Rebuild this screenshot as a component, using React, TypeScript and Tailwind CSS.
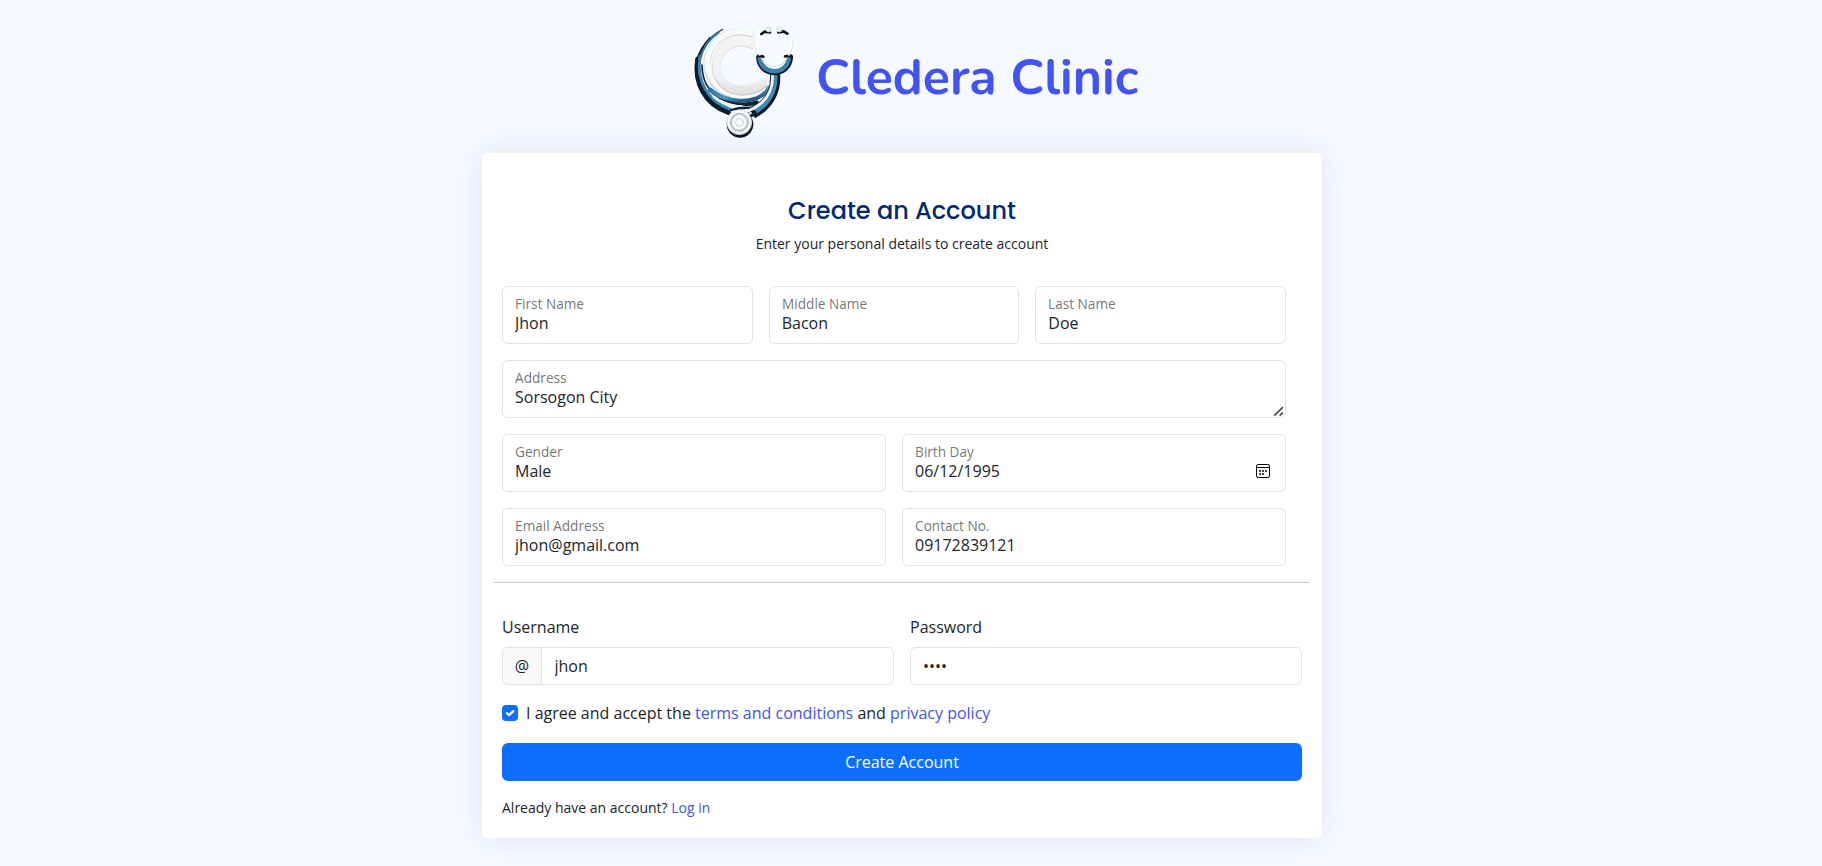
import React from "react";

const fieldBase =
  "block w-full h-[58px] rounded-md border border-[#dee2e6] bg-white px-3 pt-[26px] pb-[10px] text-base leading-[20px] text-[#212529] outline-none";

function FieldLabel({ children, htmlFor }: { children: React.ReactNode; htmlFor: string }) {
  return (
    <label
      htmlFor={htmlFor}
      className="pointer-events-none absolute top-0 left-0 origin-top-left border border-transparent px-3 py-4 text-base leading-6 whitespace-nowrap text-[#212529]/65 [transform:scale(.85)_translateY(-.5rem)_translateX(.15rem)]"
    >
      {children}
    </label>
  );
}

function Field({
  id,
  label,
  value,
  children,
}: {
  id: string;
  label: string;
  value: string;
  children?: React.ReactNode;
}) {
  return (
    <div className="relative min-w-0 flex-1">
      <input id={id} type="text" defaultValue={value} className={fieldBase} />
      <FieldLabel htmlFor={id}>{label}</FieldLabel>
      {children}
    </div>
  );
}

function CalendarIcon() {
  return (
    <svg viewBox="0 0 14 14" className="absolute top-[30px] right-4 h-[14px] w-[14px]" fill="none">
      <rect x=".5" y=".5" width="13" height="13" rx="1.6" stroke="#000" />
      <path d="M1 3.5H13" stroke="#000" />
      <path d="M3 6h2v2H3zM6 6h2v2H6zM9 6h2v2H9zM3 9h2v2H3zM6 9h2v2H6z" fill="#444" />
    </svg>
  );
}

function ResizeGrip() {
  return (
    <svg viewBox="0 0 11 10" className="absolute right-[2px] bottom-[2px] h-[10px] w-[11px]" fill="none" stroke="#4d4d4d" strokeWidth="1.7">
      <path d="M1.2 9.6L10 1.2M6.6 9.6L10 6.6" />
    </svg>
  );
}

function Logo() {
  return (
    <svg viewBox="0 0 390 390" className="h-[130px] w-[130px] shrink-0" fill="none" strokeLinecap="round" strokeLinejoin="round">
      <defs>
        <linearGradient id="tube" x1="0" y1="0" x2="1" y2="1">
          <stop offset="0" stopColor="#2d6f99" />
          <stop offset=".5" stopColor="#4596c4" />
          <stop offset="1" stopColor="#16324a" />
        </linearGradient>
        <linearGradient id="letter" x1="0" y1="0" x2="0" y2="1">
          <stop offset="0" stopColor="#f4f4f4" />
          <stop offset=".7" stopColor="#f1f1f1" />
          <stop offset="1" stopColor="#e3e4e4" />
        </linearGradient>
        <radialGradient id="disc">
          <stop offset="0" stopColor="#ffffff" />
          <stop offset=".6" stopColor="#e4e8eb" />
          <stop offset="1" stopColor="#c3cbd1" />
        </radialGradient>
      </defs>
      {/* outer tubing */}
      <path d="M128 43C84 66 58 103 51 140" stroke="#2b4c66" strokeWidth="4" />
      <path d="M90 70C70 92 56 117 51 140" stroke="#0c1c2b" strokeWidth="7" />
      <path d="M53 132C42 205 75 268 145 292" stroke="#0c1c2b" strokeWidth="15" />
      <path d="M60 125C49 197 80 256 151 283" stroke="#3b83ae" strokeWidth="9" />
      <path d="M116 53C85 73 70 96 62 128" stroke="#3577a1" strokeWidth="6" />
      <path d="M68 150C67 200 94 254 160 276" stroke="#fafcfd" strokeWidth="8" />
      <path d="M66 150C66 180 73 204 90 225" stroke="#14232f" strokeWidth="5" />
      {/* letter C */}
      <path d="M220 58C155 37 96 70 83 127C74 181 105 225 151 239" stroke="#d6dadd" strokeWidth="22" strokeLinecap="butt" />
      <path d="M219 55C155 35 98 69 83 127C75 177 108 221 151 236" stroke="#f8f9f9" strokeWidth="17" strokeLinecap="butt" />
      <path d="M224 91C176 68 128 86 112 132C99 184 133 225 180 228C213 231 235 221 253 204" stroke="#ced2d5" strokeWidth="27" strokeLinecap="butt" />
      <path d="M223 89C176 67 129 85 112 131C101 181 134 221 180 224C211 226 232 217 250 201" stroke="url(#letter)" strokeWidth="25" />
      {/* lower tubing */}
      <path d="M89 225C124 261 184 276 230 260" stroke="#0d2435" strokeWidth="8" />
      <path d="M90 223C126 256 184 265 229 250C249 241 261 230 266 218" stroke="url(#tube)" strokeWidth="12" />
      <path d="M190 268C210 270 222 268 233 263" stroke="#0d1f2e" strokeWidth="8" />
      <path d="M101 245C126 266 158 274 188 276" stroke="#eef4f8" strokeWidth="8" />
      <path d="M153 285C173 279 194 277 215 279" stroke="#102436" strokeWidth="7" />
      <path d="M292 178C295 225 277 273 221 302" stroke="#0c1c2b" strokeWidth="17" strokeLinecap="butt" />
      <path d="M285 175C290 222 270 269 216 296" stroke="#3f8ab7" strokeWidth="13" strokeLinecap="butt" />
      <path d="M273 175C277 221 260 259 213 278" stroke="#132b3c" strokeWidth="7" strokeLinecap="butt" />
      <path d="M277 174C281 220 264 262 207 286" stroke="#f9fbfc" strokeWidth="8" strokeLinecap="butt" />
      {/* yoke */}
      <path d="M237 128C240 186 326 188 331 126" stroke="#0b1927" strokeWidth="17" />
      <path d="M239 131C247 181 318 181 326 132" stroke="#3b83af" strokeWidth="13" />
      <path d="M246 124C256 160 306 160 318 125" stroke="#d7e2e9" strokeWidth="11" />
      <path d="M246 121C257 157 305 157 318 122" stroke="#fcfdfd" strokeWidth="9" />
      <path d="M235 122L250 125M315 124L331 122" stroke="#0b1927" strokeWidth="8" />
      {/* ear tubes */}
      <path d="M239 117C223 86 226 63 244 55L262 52M327 117C340 83 336 64 319 54L301 51" stroke="#dce1e5" strokeWidth="10" />
      <path d="M239 114C224 86 227 63 244 54L262 50M326 114C339 82 334 63 319 53L301 49" stroke="#fff" strokeWidth="8" />
      <path d="M244 57L254 50L270 52M295 52L311 49L322 56" stroke="#091521" strokeWidth="8" />
      <ellipse cx="266" cy="43" rx="8" ry="8" fill="#eceeef" stroke="#d3d8db" strokeWidth="2" />
      <ellipse cx="298" cy="43" rx="8" ry="8" fill="#eceeef" stroke="#d3d8db" strokeWidth="2" />
      {/* chest piece */}
      <path d="M199 305L221 294" stroke="#0b1927" strokeWidth="17" />
      <path d="M201 299L213 294" stroke="#eef2f4" strokeWidth="6" />
      <circle cx="180" cy="328" r="40" fill="#0b1927" />
      <circle cx="178" cy="322" r="38" fill="#d6dce0" />
      <circle cx="177" cy="321" r="35" fill="#f8f9fa" />
      <circle cx="178" cy="322" r="27" fill="url(#disc)" stroke="#a9b3ba" strokeWidth="3" />
      <circle cx="178" cy="322" r="18" fill="#e9ecee" stroke="#fff" strokeWidth="5" />
      <circle cx="178" cy="322" r="11" fill="#f8f9f9" stroke="#c5cdd2" strokeWidth="2" />
    </svg>
  );
}

export default function App() {
  return (
    <div className="flex h-[866px] flex-col items-center overflow-hidden bg-[#f6f9ff] pr-[18px] font-['Open_Sans',sans-serif] text-base text-[#212529]">
      <header className="ml-[18px] flex h-[153px] w-[462px] shrink-0 pt-[15px]">
        <Logo />
        <h1 className="mt-[27px] ml-[6px] text-[50px] leading-[72px] font-bold whitespace-nowrap text-[#4154f1] font-['Nunito','Lato',sans-serif]">
          Cledera Clinic
        </h1>
      </header>

      <main className="h-[685px] w-[840px] shrink-0 rounded-[5px] bg-white px-5 shadow-[0_0_30px_rgba(1,41,112,0.1)]">
        <div className="flex h-[133px] flex-col items-center pt-[40px]">
          <h2 className="text-[24px] leading-[36px] font-medium whitespace-nowrap text-[#012970] font-['Poppins','Inter',sans-serif]">
            Create an Account
          </h2>
          <p className="mt-[4px] text-[14px] leading-[21px]">Enter your personal details to create account</p>
        </div>

        <section className="flex flex-col gap-4 pr-4">
          <div className="flex gap-4">
            <Field id="first" label="First Name" value="Jhon" />
            <Field id="middle" label="Middle Name" value="Bacon" />
            <Field id="last" label="Last Name" value="Doe" />
          </div>
          <div className="relative">
            <textarea
              id="address"
              defaultValue="Sorsogon City"
              className="block h-[58px] w-full resize-none rounded-md border border-[#dee2e6] bg-white px-3 pt-[24px] pb-[8px] text-base leading-6 outline-none"
            />
            <FieldLabel htmlFor="address">Address</FieldLabel>
            <ResizeGrip />
          </div>
          <div className="flex gap-4">
            <Field id="gender" label="Gender" value="Male" />
            <Field id="birth" label="Birth Day" value="06/12/1995">
              <CalendarIcon />
            </Field>
          </div>
          <div className="flex gap-4">
            <Field id="email" label="Email Address" value="jhon@gmail.com" />
            <Field id="contact" label="Contact No." value="09172839121" />
          </div>
        </section>

        <hr className="-mx-2 mt-4 border-t border-[#c7c8c9]" />

        <section className="mt-8 flex gap-4">
          <div className="flex-1">
            <label htmlFor="username" className="block leading-6">Username</label>
            <div className="mt-2 flex h-[38px] overflow-hidden rounded-md border border-[#dee2e6]">
              <span className="flex w-[39px] items-center justify-center border-r border-[#dee2e6] bg-[#f8f9fa]">@</span>
              <input id="username" defaultValue="jhon" className="min-w-0 flex-1 pr-3 pl-[12.5px] leading-6 outline-none" />
            </div>
          </div>
          <div className="flex-1">
            <label htmlFor="password" className="block leading-6">Password</label>
            <input
              id="password"
              type="password"
              defaultValue="jhon"
              className="mt-2 block h-[38px] w-full rounded-md border border-[#dee2e6] px-3 leading-6 outline-none"
            />
          </div>
        </section>

        <div className="mt-4 flex items-center gap-2 leading-6">
          <span className="flex h-4 w-4 items-center justify-center rounded-[4px] bg-[#0d6efd]">
            <svg viewBox="0 0 20 20" className="h-4 w-4" fill="none" stroke="#fff" strokeWidth="2.8" strokeLinecap="round" strokeLinejoin="round">
              <path d="m6.2 10.2 2.6 2.5 5.4-5" />
            </svg>
          </span>
          <p>
            I agree and accept the <a className="text-[#4154f1]">terms and conditions</a> and{" "}
            <a className="text-[#4154f1]">privacy policy</a>
          </p>
        </div>

        <button className="mt-[18px] block h-[38px] w-full rounded-md bg-[#0d6efd] leading-6 text-white">Create Account</button>
        <p className="mt-4 text-[14px] leading-[21px]">
          Already have an account? <a className="text-[#4154f1]">Log in</a>
        </p>
      </main>
    </div>
  );
}
